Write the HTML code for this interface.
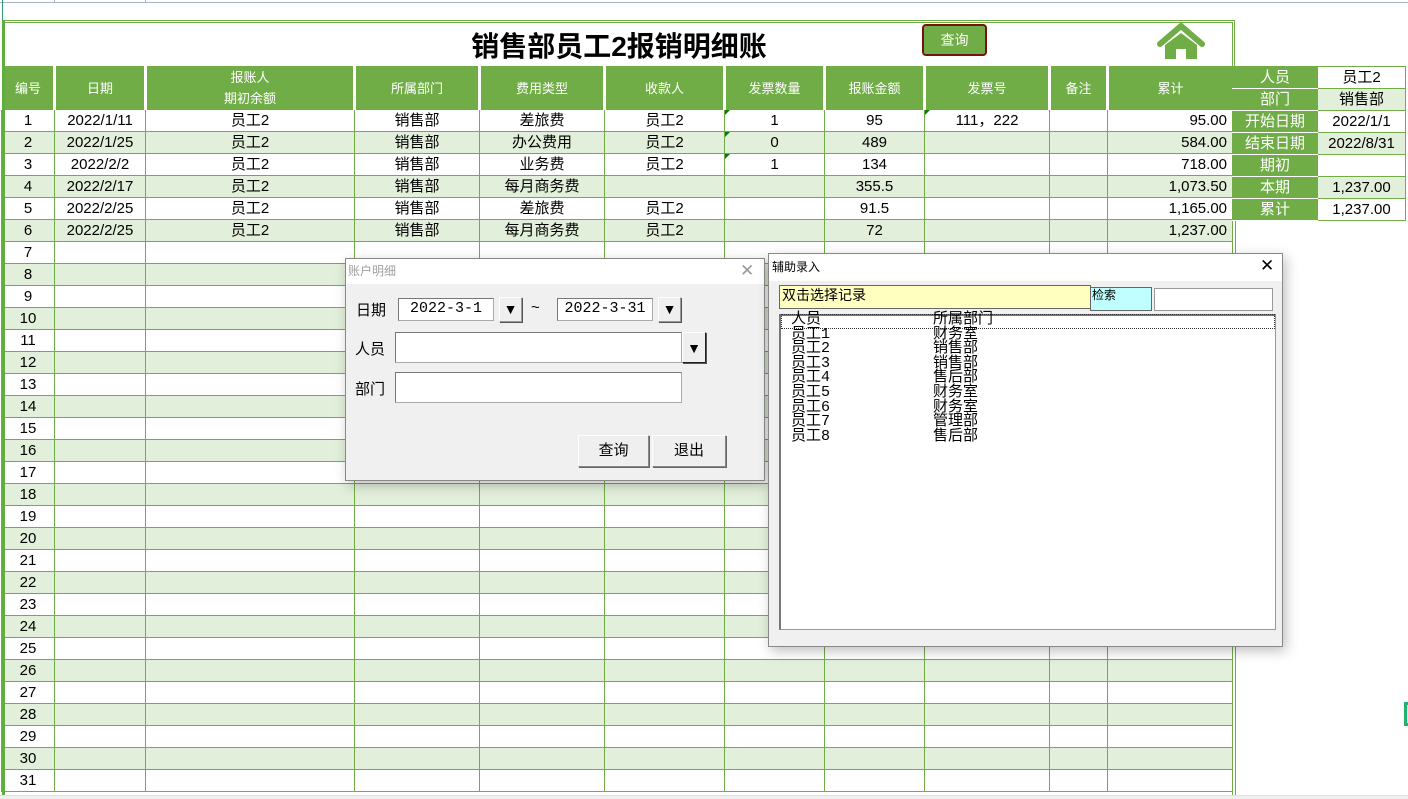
<!DOCTYPE html>
<html><head><meta charset="utf-8"><style>
*{margin:0;padding:0;box-sizing:border-box}
body{width:1408px;height:799px;overflow:hidden;background:#fff;position:relative;font-family:"Liberation Sans","Noto Sans CJK SC",sans-serif;font-size:15px;color:#000}
.abs{position:absolute}
table{border-collapse:collapse;table-layout:fixed;position:absolute}
#t td{border:1px solid #70ad47;height:22px;text-align:center;padding:0 2px;white-space:nowrap;overflow:hidden;font-size:15px;line-height:20px}
#t tr.h td{background:#70ad47;color:#fff;height:43px;font-size:13px;border-left:3px double #fff;border-right:1px solid #70ad47;line-height:21px}
#t tr:nth-child(odd):not(.h) td{background:#e2efda}
#t td.r{text-align:right;padding-right:5px}
#s td{border:1px solid #70ad47;height:22px;text-align:center;font-size:15px;line-height:20px}
#s td.l{background:#70ad47;color:#fff;border-bottom:1px solid #fff}
.tri{position:absolute;width:0;height:0;border-top:5px solid #0a7a0a;border-right:5px solid transparent}
.dlg{position:absolute;background:#f0f0f0;border:1px solid #888;box-shadow:3px 4px 12px rgba(0,0,0,.25)}
.fld{position:absolute;background:#fff;border:1px solid #aaa;border-top-color:#777;border-left-color:#777;font-family:"Liberation Mono","Noto Sans CJK SC",monospace;font-size:15px;text-align:center;line-height:20px}
.btn{position:absolute;background:#efefef;border:1px solid #888;border-top-color:#fff;border-left-color:#fff;box-shadow:1px 1px 0 #666;text-align:center;font-size:15px}
.dd{position:absolute;background:#efefef;border:1px solid #999;border-top-color:#fff;border-left-color:#fff;box-shadow:1px 1px 0 #555;font-size:14px;text-align:center;line-height:22px;color:#000}
</style></head><body>
<div class="abs" style="left:0;top:2px;width:1408px;height:1px;background:#a8b3c8"></div>
<div class="abs" style="left:54px;top:0;width:1px;height:3px;background:#a8b3c8"></div>
<div class="abs" style="left:145px;top:0;width:1px;height:3px;background:#a8b3c8"></div>
<div class="abs" style="left:2px;top:0;width:1px;height:22px;background:#2e9e6e"></div>
<div class="abs" style="left:4px;top:20px;width:1231px;height:46px;border:3px double #70ad47;border-bottom:none;border-left:none"></div>
<div class="abs" style="left:0;top:25px;width:1238px;text-align:center;font-size:28px;font-weight:bold;font-family:'Liberation Sans','Noto Sans CJK SC',sans-serif">销售部员工2报销明细账</div>
<div class="abs" style="left:922px;top:24px;width:65px;height:32px;background:#70ad47;border:2px solid #7b1010;border-radius:4px;color:#fff;text-align:center;line-height:28px;font-size:14px">查询</div>
<svg class="abs" style="left:1155px;top:20px" width="52" height="42" viewBox="0 0 52 42"><path d="M5 24 L26 6 L47 24" fill="none" stroke="#70ad47" stroke-width="6" stroke-linecap="round" stroke-linejoin="round"/><path d="M10 25 L26 13 L42 25 L42 39 L31 39 L31 29 L21 29 L21 39 L10 39 Z" fill="#70ad47"/></svg>
<div class="abs" style="left:1232px;top:66px;width:1px;height:733px;background:#70ad47"></div>
<div class="abs" style="left:1235px;top:219px;width:1px;height:580px;background:#70ad47"></div>
<table id="t" style="left:0;top:66px;width:1231px">
<colgroup><col style="width:53px"><col style="width:91px"><col style="width:209px"><col style="width:125px"><col style="width:125px"><col style="width:120px"><col style="width:100px"><col style="width:100px"><col style="width:125px"><col style="width:58px"><col style="width:125px"></colgroup>
<tr class="h"><td>编号</td><td>日期</td><td>报账人<br>期初余额</td><td>所属部门</td><td>费用类型</td><td>收款人</td><td>发票数量</td><td>报账金额</td><td>发票号</td><td>备注</td><td>累计</td></tr>
<tr><td>1</td><td>2022/1/11</td><td>员工2</td><td>销售部</td><td>差旅费</td><td>员工2</td><td>1</td><td>95</td><td>111，222</td><td></td><td class="r">95.00</td></tr>
<tr><td>2</td><td>2022/1/25</td><td>员工2</td><td>销售部</td><td>办公费用</td><td>员工2</td><td>0</td><td>489</td><td></td><td></td><td class="r">584.00</td></tr>
<tr><td>3</td><td>2022/2/2</td><td>员工2</td><td>销售部</td><td>业务费</td><td>员工2</td><td>1</td><td>134</td><td></td><td></td><td class="r">718.00</td></tr>
<tr><td>4</td><td>2022/2/17</td><td>员工2</td><td>销售部</td><td>每月商务费</td><td></td><td></td><td>355.5</td><td></td><td></td><td class="r">1,073.50</td></tr>
<tr><td>5</td><td>2022/2/25</td><td>员工2</td><td>销售部</td><td>差旅费</td><td>员工2</td><td></td><td>91.5</td><td></td><td></td><td class="r">1,165.00</td></tr>
<tr><td>6</td><td>2022/2/25</td><td>员工2</td><td>销售部</td><td>每月商务费</td><td>员工2</td><td></td><td>72</td><td></td><td></td><td class="r">1,237.00</td></tr>
<tr><td>7</td><td></td><td></td><td></td><td></td><td></td><td></td><td></td><td></td><td></td><td></td></tr>
<tr><td>8</td><td></td><td></td><td></td><td></td><td></td><td></td><td></td><td></td><td></td><td></td></tr>
<tr><td>9</td><td></td><td></td><td></td><td></td><td></td><td></td><td></td><td></td><td></td><td></td></tr>
<tr><td>10</td><td></td><td></td><td></td><td></td><td></td><td></td><td></td><td></td><td></td><td></td></tr>
<tr><td>11</td><td></td><td></td><td></td><td></td><td></td><td></td><td></td><td></td><td></td><td></td></tr>
<tr><td>12</td><td></td><td></td><td></td><td></td><td></td><td></td><td></td><td></td><td></td><td></td></tr>
<tr><td>13</td><td></td><td></td><td></td><td></td><td></td><td></td><td></td><td></td><td></td><td></td></tr>
<tr><td>14</td><td></td><td></td><td></td><td></td><td></td><td></td><td></td><td></td><td></td><td></td></tr>
<tr><td>15</td><td></td><td></td><td></td><td></td><td></td><td></td><td></td><td></td><td></td><td></td></tr>
<tr><td>16</td><td></td><td></td><td></td><td></td><td></td><td></td><td></td><td></td><td></td><td></td></tr>
<tr><td>17</td><td></td><td></td><td></td><td></td><td></td><td></td><td></td><td></td><td></td><td></td></tr>
<tr><td>18</td><td></td><td></td><td></td><td></td><td></td><td></td><td></td><td></td><td></td><td></td></tr>
<tr><td>19</td><td></td><td></td><td></td><td></td><td></td><td></td><td></td><td></td><td></td><td></td></tr>
<tr><td>20</td><td></td><td></td><td></td><td></td><td></td><td></td><td></td><td></td><td></td><td></td></tr>
<tr><td>21</td><td></td><td></td><td></td><td></td><td></td><td></td><td></td><td></td><td></td><td></td></tr>
<tr><td>22</td><td></td><td></td><td></td><td></td><td></td><td></td><td></td><td></td><td></td><td></td></tr>
<tr><td>23</td><td></td><td></td><td></td><td></td><td></td><td></td><td></td><td></td><td></td><td></td></tr>
<tr><td>24</td><td></td><td></td><td></td><td></td><td></td><td></td><td></td><td></td><td></td><td></td></tr>
<tr><td>25</td><td></td><td></td><td></td><td></td><td></td><td></td><td></td><td></td><td></td><td></td></tr>
<tr><td>26</td><td></td><td></td><td></td><td></td><td></td><td></td><td></td><td></td><td></td><td></td></tr>
<tr><td>27</td><td></td><td></td><td></td><td></td><td></td><td></td><td></td><td></td><td></td><td></td></tr>
<tr><td>28</td><td></td><td></td><td></td><td></td><td></td><td></td><td></td><td></td><td></td><td></td></tr>
<tr><td>29</td><td></td><td></td><td></td><td></td><td></td><td></td><td></td><td></td><td></td><td></td></tr>
<tr><td>30</td><td></td><td></td><td></td><td></td><td></td><td></td><td></td><td></td><td></td><td></td></tr>
<tr><td>31</td><td></td><td></td><td></td><td></td><td></td><td></td><td></td><td></td><td></td><td></td></tr>
</table>
<div class="abs" style="left:2px;top:20px;width:3px;height:779px;background:#5fae3f"></div>
<div class="tri" style="left:725px;top:110px"></div><div class="tri" style="left:725px;top:132px"></div><div class="tri" style="left:725px;top:154px"></div><div class="tri" style="left:925px;top:110px"></div>
<table id="s" style="left:1232px;top:66px;width:173px">
<colgroup><col style="width:85px"><col style="width:88px"></colgroup>
<tr><td class="l">人员</td><td>员工2</td></tr>
<tr><td class="l">部门</td><td style="background:#e2efda">销售部</td></tr>
<tr><td class="l">开始日期</td><td>2022/1/1</td></tr>
<tr><td class="l">结束日期</td><td style="background:#e2efda">2022/8/31</td></tr>
<tr><td class="l">期初</td><td></td></tr>
<tr><td class="l">本期</td><td style="background:#e2efda">1,237.00</td></tr>
<tr><td class="l">累计</td><td>1,237.00</td></tr>
</table>
<div class="abs" style="left:1404px;top:702px;width:6px;height:24px;border:3px solid #1fb36e;border-right:none"></div>
<div class="abs" style="left:0;top:795px;width:1408px;height:4px;background:#f0f0f3;border-top:1px solid #e0e0e6"></div>

<div class="dlg" style="left:345px;top:258px;width:420px;height:223px">
<div class="abs" style="left:0;top:0;width:418px;height:25px;background:#fff;color:#a0a0a0;font-size:12px;line-height:24px;padding-left:2px">账户明细</div>
<div class="abs" style="left:394px;top:2px;color:#999;font-size:17px">✕</div>
<div class="abs" style="left:10px;top:40px;font-size:15px">日期</div>
<div class="fld" style="left:52px;top:39px;width:96px;height:23px">2022-3-1</div>
<div class="dd" style="left:153px;top:38px;width:23px;height:25px">▼</div>
<div class="abs" style="left:185px;top:40px;font-size:15px">~</div>
<div class="fld" style="left:211px;top:39px;width:96px;height:23px">2022-3-31</div>
<div class="dd" style="left:312px;top:38px;width:23px;height:25px">▼</div>
<div class="abs" style="left:9px;top:79px;font-size:15px">人员</div>
<div class="fld" style="left:49px;top:73px;width:287px;height:31px"></div>
<div class="dd" style="left:336px;top:73px;width:24px;height:31px;line-height:30px;border:1px solid #222;border-top-color:#fff;border-left-color:#fff">▼</div>
<div class="abs" style="left:9px;top:119px;font-size:15px">部门</div>
<div class="fld" style="left:49px;top:113px;width:287px;height:31px"></div>
<div class="btn" style="left:232px;top:176px;width:71px;height:32px;line-height:30px">查询</div>
<div class="btn" style="left:306px;top:176px;width:74px;height:32px;line-height:30px">退出</div>
</div>

<div class="dlg" style="left:768px;top:253px;width:515px;height:394px">
<div class="abs" style="left:0;top:0;width:513px;height:27px;background:#fff;font-size:12px;line-height:26px;padding-left:3px">辅助录入</div>
<div class="abs" style="left:491px;top:2px;font-size:17px">✕</div>
<div class="abs" style="left:10px;top:31px;width:312px;height:24px;background:#ffffc0;border:1px solid #666;font-size:14px;line-height:18px;padding-left:2px">双击选择记录</div>
<div class="abs" style="left:321px;top:33px;width:62px;height:24px;background:#c0ffff;border:1px solid #666;font-size:12px;line-height:14px;padding-left:1px">检索</div>
<div class="abs" style="left:385px;top:34px;width:119px;height:23px;background:#fff;border:1px solid #999"></div>
<div class="abs" style="left:10px;top:60px;width:497px;height:316px;background:#fff;border:1px solid #999;border-top:2px solid #777;border-left:2px solid #777"></div>
<div class="abs" style="left:12px;top:60px;width:494px;height:15px;border:1px dotted #333"></div>
<div class="abs" style="left:22px;top:59px;font-size:15px;line-height:14.6px;font-family:'Liberation Mono','Noto Sans CJK SC',monospace">人员<br>员工1<br>员工2<br>员工3<br>员工4<br>员工5<br>员工6<br>员工7<br>员工8</div>
<div class="abs" style="left:164px;top:59px;font-size:15px;line-height:14.6px;font-family:'Liberation Mono','Noto Sans CJK SC',monospace">所属部门<br>财务室<br>销售部<br>销售部<br>售后部<br>财务室<br>财务室<br>管理部<br>售后部</div>
</div>
</body></html>
